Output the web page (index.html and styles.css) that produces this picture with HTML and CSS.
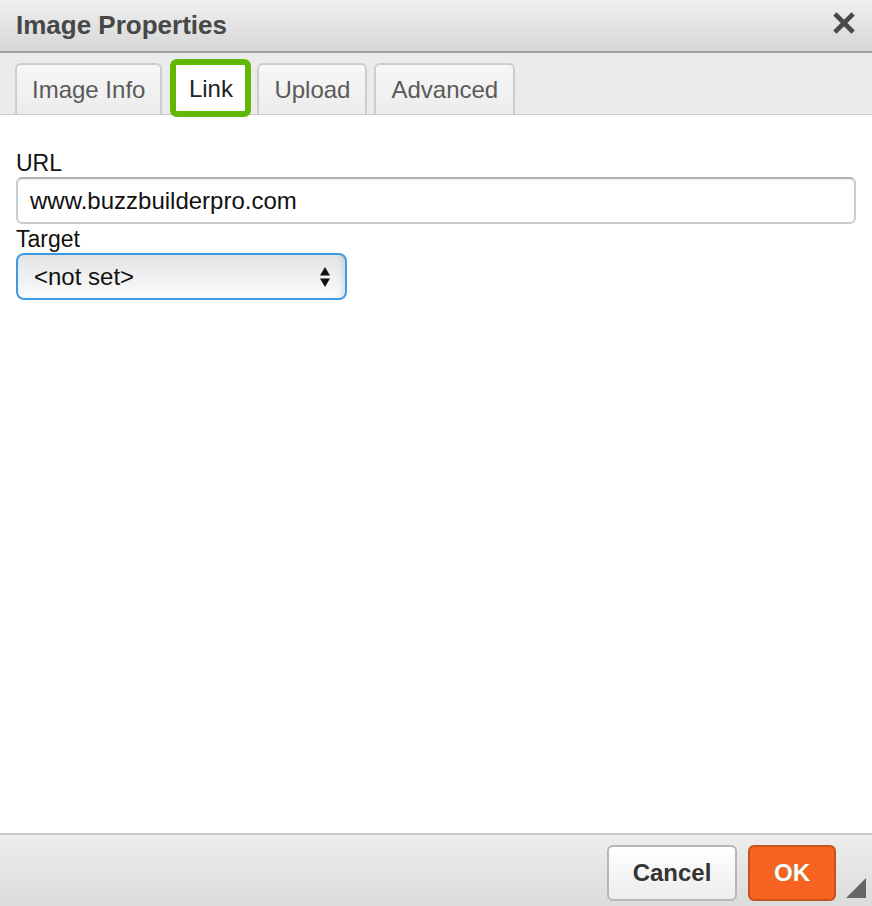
FILE: index.html
```html
<!DOCTYPE html>
<html>
<head>
<meta charset="utf-8">
<title>Image Properties</title>
<link rel="stylesheet" href="styles.css">
</head>
<body>
<div class="dialog">
  <div class="titlebar">
    <span class="title">Image Properties</span>
    <span class="close" aria-label="Close">
      <svg width="22" height="22" viewBox="0 0 22 22"><path d="M3.5 3.5 L18.5 18.5 M18.5 3.5 L3.5 18.5" stroke="#4a4a4a" stroke-width="4.6" stroke-linecap="square"/></svg>
    </span>
  </div>
  <div class="tabs">
    <div class="tab">Image Info</div>
    <div class="tab tab-active">Link</div>
    <div class="tab">Upload</div>
    <div class="tab">Advanced</div>
  </div>
  <div class="content">
    <label class="label">URL</label>
    <div class="input">www.buzzbuilderpro.com</div>
    <label class="label label-target">Target</label>
    <div class="select">
      <span>&lt;not set&gt;</span>
      <svg class="arrows" width="12" height="22" viewBox="0 0 12 22"><path d="M6 1 L11 9.5 L1 9.5 Z M1 12.5 L11 12.5 L6 21 Z" fill="#111"/></svg>
    </div>
  </div>
  <div class="footer">
    <div class="btn btn-cancel">Cancel</div>
    <div class="btn btn-ok">OK</div>
    <span class="grip"></span>
  </div>
</div>
</body>
</html>
```
FILE: styles.css
```css
html, body {
  margin: 0;
  padding: 0;
}
body {
  font-family: "Liberation Sans", Arial, sans-serif;
  background: #fff;
}
.dialog {
  width: 872px;
  height: 906px;
  display: flex;
  flex-direction: column;
  overflow: hidden;
}
.titlebar {
  height: 51px;
  flex: none;
  display: flex;
  align-items: center;
  justify-content: space-between;
  padding: 0 17px 0 16px;
  background: linear-gradient(#f0f0f0, #d6d6d6);
  border-bottom: 2px solid #a3a3a3;
}
.title {
  font-size: 26px;
  font-weight: bold;
  color: #474747;
}
.close {
  display: flex;
  margin-top: -5px;
}
.tabs {
  flex: none;
  height: 51px;
  padding: 10px 0 0 15px;
  display: flex;
  align-items: flex-end;
  gap: 7px;
  background: #ebebeb;
  border-bottom: 1px solid #c9c9c9;
}
.tab {
  height: 51px;
  box-sizing: border-box;
  padding: 0 15px;
  display: flex;
  align-items: center;
  font-size: 24px;
  color: #5a5a5a;
  background: linear-gradient(#f7f7f7, #ececec);
  border: 2px solid #cdcdcd;
  border-bottom: none;
  border-radius: 6px 6px 0 0;
}
.tab-active {
  height: 58px;
  margin: -4px -1px -3px 1px;
  width: 81px;
  padding: 2px 0 0 0;
  justify-content: center;
  background: #fff;
  border: 6px solid #62b800;
  border-radius: 7px;
  color: #222;
}
.content {
  flex: 1;
  padding: 35px 16px 0 16px;
  display: flex;
  flex-direction: column;
  align-items: flex-start;
}
.label {
  font-size: 23px;
  color: #111;
  line-height: 27px;
}
.label-target {
  margin-top: 2px;
}
.input {
  align-self: stretch;
  height: 47px;
  box-sizing: border-box;
  border: 2px solid #c9cdd0;
  border-top-color: #b0b3b6;
  border-radius: 6px;
  padding: 0 12px;
  display: flex;
  align-items: center;
  font-size: 24px;
  color: #111;
  box-shadow: inset 0 1px 2px rgba(0,0,0,0.08);
}
.select {
  margin-top: 0;
  width: 331px;
  height: 47px;
  box-sizing: border-box;
  border: 2px solid #3c9be6;
  border-radius: 8px;
  padding: 0 14px 0 16px;
  display: flex;
  align-items: center;
  justify-content: space-between;
  font-size: 24px;
  color: #111;
  background: linear-gradient(#e4e4e4, #fbfbfb);
  box-shadow: inset -6px 0 6px -4px rgba(0,0,0,0.12);
}
.arrows {
  display: block;
}
.footer {
  position: relative;
  flex: none;
  height: 73px;
  box-sizing: border-box;
  border-top: 2px solid #c5c5c5;
  background: linear-gradient(#ededed, #dcdcdc);
  display: flex;
  justify-content: flex-end;
  align-items: flex-start;
  gap: 11px;
  padding: 10px 36px 0 0;
}
.btn {
  height: 56px;
  box-sizing: border-box;
  border-radius: 6px;
  display: flex;
  align-items: center;
  justify-content: center;
  font-size: 24px;
  font-weight: bold;
}
.btn-cancel {
  width: 130px;
  color: #333;
  border: 2px solid #b6b6b6;
  background: linear-gradient(#ffffff, #ececec);
}
.btn-ok {
  width: 88px;
  color: #fff;
  border: 2px solid #c4531d;
  background: #f96322;
  text-shadow: -1px 0 0 rgba(90,140,30,0.55);
}
.grip {
  position: absolute;
  right: 6px;
  bottom: 8px;
  width: 0;
  height: 0;
  border-left: 20px solid transparent;
  border-bottom: 20px solid #666;
}
```
